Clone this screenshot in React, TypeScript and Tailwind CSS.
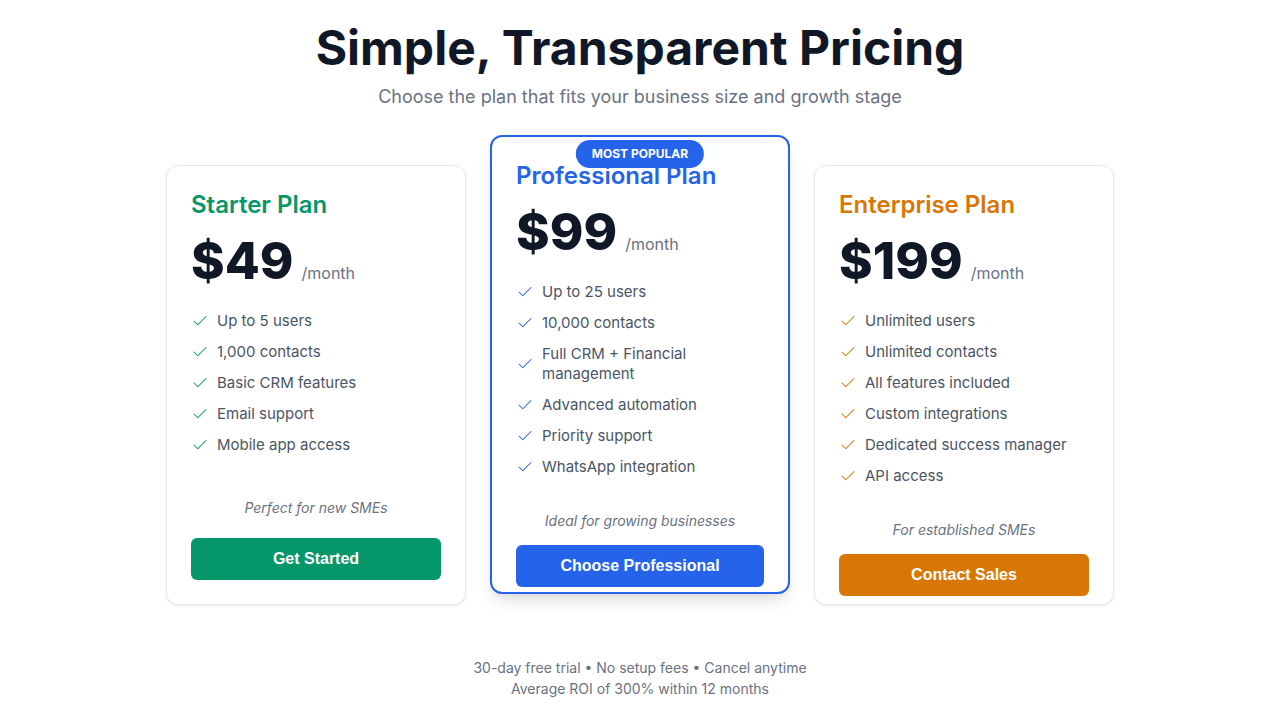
import { Check } from 'lucide-react';

type Plan = {
  name: string;
  price: string;
  features: string[];
  tagline: string;
  cta: string;
  accent: 'green' | 'blue' | 'orange';
  popular?: boolean;
};

const plans: Plan[] = [
  {
    name: 'Starter Plan',
    price: '$49',
    features: ['Up to 5 users', '1,000 contacts', 'Basic CRM features', 'Email support', 'Mobile app access'],
    tagline: 'Perfect for new SMEs',
    cta: 'Get Started',
    accent: 'green',
  },
  {
    name: 'Professional Plan',
    price: '$99',
    features: [
      'Up to 25 users',
      '10,000 contacts',
      'Full CRM + Financial management',
      'Advanced automation',
      'Priority support',
      'WhatsApp integration',
    ],
    tagline: 'Ideal for growing businesses',
    cta: 'Choose Professional',
    accent: 'blue',
    popular: true,
  },
  {
    name: 'Enterprise Plan',
    price: '$199',
    features: [
      'Unlimited users',
      'Unlimited contacts',
      'All features included',
      'Custom integrations',
      'Dedicated success manager',
      'API access',
    ],
    tagline: 'For established SMEs',
    cta: 'Contact Sales',
    accent: 'orange',
  },
];

const accents = {
  green: { text: 'text-[#059669]', bg: 'bg-[#059669]' },
  blue: { text: 'text-[#2563eb]', bg: 'bg-[#2563eb]' },
  orange: { text: 'text-[#d97706]', bg: 'bg-[#d97706]' },
};

function PlanCard({ plan }: { plan: Plan }) {
  const a = accents[plan.accent];
  // starter has spare room, the other two run past their fixed height
  const roomy = plan.features.length < 6;

  return (
    <div
      className={
        plan.popular
          ? 'relative -mt-[30px] flex h-[459px] w-[300px] flex-col rounded-xl border-2 border-[#2563eb] bg-white p-6 shadow-[0_10px_18px_-4px_rgba(0,0,0,0.12),0_4px_8px_-4px_rgba(0,0,0,0.08)]'
          : 'flex h-[440px] w-[300px] flex-col rounded-xl border border-gray-200 bg-white p-6 shadow-[0_1px_3px_rgba(0,0,0,0.08)]'
      }
    >
      {plan.popular && (
        <div className="absolute left-1/2 top-[3px] -translate-x-1/2 rounded-full bg-[#2563eb] px-4 py-1.5 text-xs leading-4 font-bold text-white">
          MOST POPULAR
        </div>
      )}
      <h3 className={`-mt-px text-2xl leading-8 font-semibold ${a.text}`}>{plan.name}</h3>
      <div className="mt-4 flex items-baseline">
        <span className="text-[51px] leading-[48px] font-extrabold text-gray-900">{plan.price}</span>
        <span className="ml-2 text-base text-gray-500">/month</span>
      </div>
      <ul className="mt-[26px] flex flex-col gap-[11px]">
        {plan.features.map((f) => (
          <li key={f} className="flex items-center gap-2 text-[15px] leading-5 text-gray-600">
            <Check size={18} strokeWidth={1.4} className={`shrink-0 ${a.text}`} />
            <span>{f}</span>
          </li>
        ))}
      </ul>
      <p
        className={`text-center text-sm leading-5 text-gray-500 italic ${
          roomy ? 'mt-[43px] mb-[20px]' : 'mt-[34px] mb-[14px]'
        }`}
      >
        {plan.tagline}
      </p>
      <button
        className={`h-[42px] w-full shrink-0 rounded-md text-base font-bold text-white ${a.bg}`}
        style={{ fontFamily: '"Liberation Sans", Arial, sans-serif' }}
      >
        {plan.cta}
      </button>
    </div>
  );
}

export default function App() {
  return (
    <div className="min-h-screen bg-white pt-6 font-['Inter',sans-serif]">
      <div className="text-center">
        <h1 className="text-5xl leading-none font-bold text-gray-900">Simple, Transparent Pricing</h1>
        <p className="mt-[11px] text-lg leading-7 text-gray-500">Choose the plan that fits your business size and growth stage</p>
      </div>

      <div className="mt-[54px] flex items-start justify-center gap-6">
        {plans.map((p) => (
          <PlanCard key={p.name} plan={p} />
        ))}
      </div>

      <div className="mt-[52px] text-center text-sm leading-[21px] text-gray-500">
        <p>30-day free trial • No setup fees • Cancel anytime</p>
        <p>Average ROI of 300% within 12 months</p>
      </div>
    </div>
  );
}
